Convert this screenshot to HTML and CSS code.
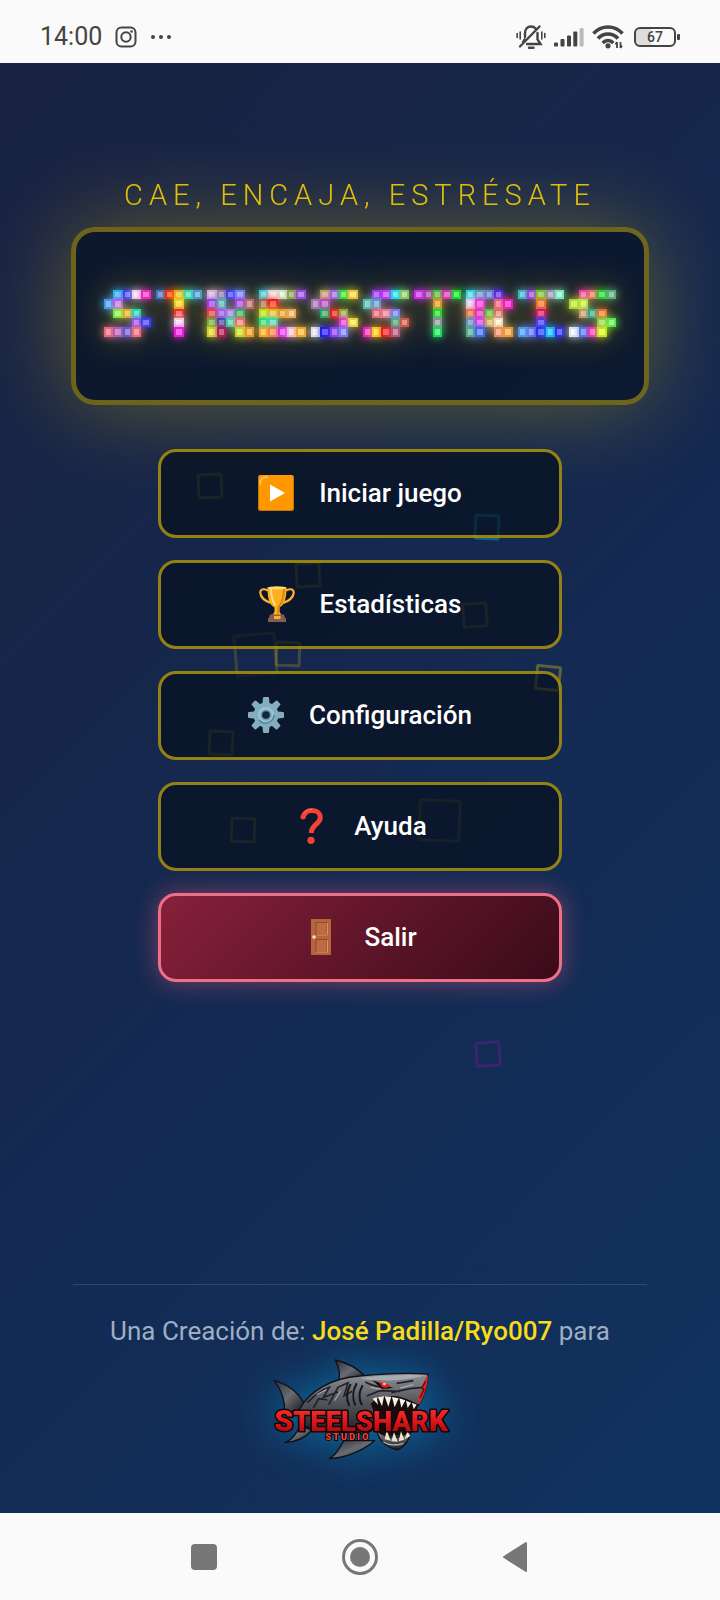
FILE: index.html
```
<!DOCTYPE html>
<html lang="es">
<head>
  <meta charset="UTF-8" />
  <meta name="viewport" content="width=device-width, initial-scale=1.0"/>
  <title>Stresstris</title>
  <link rel="stylesheet" href="styles.css">
</head>
<body>

  <!-- Status bar -->
  <header class="status-bar">
    <div class="status-group">
      <span class="clock">14:00</span>
      <svg class="icon-insta" viewBox="0 0 22 22" fill="none" stroke="#444" stroke-width="2">
        <rect x="1.5" y="1.5" width="19" height="19" rx="5"/>
        <circle cx="11" cy="11" r="4.7"/>
        <circle cx="16.5" cy="5.5" r="1.3" fill="#444" stroke="none"/>
      </svg>
      <svg class="icon-more" viewBox="0 0 22 6" fill="#444">
        <circle cx="3" cy="3" r="2"/><circle cx="11" cy="3" r="2"/><circle cx="19" cy="3" r="2"/>
      </svg>
    </div>
    <div class="status-group status-right">
      <svg class="icon-bell" viewBox="0 0 30 26" fill="none" stroke="#444" stroke-width="2.4" stroke-linecap="round">
        <path d="M9 13V9.500C9 5 11.500 2.500 15 2.500c2 0 3.500.7 4.500 2M21.500 9v6.500l3 4.500H11M8.500 15.500 7 18.500M4 22.500 23.500 2.500M13 23.800h4.500"/>
        <path d="M1.200 9.500v4M4.200 8v7M28.800 9.500v4M25.800 8v7" stroke-width="1.600"/>
      </svg>
      <svg class="icon-signal" viewBox="0 0 30 20" fill="#444">
        <rect x="0" y="15.500" width="4" height="4" rx="1"/>
        <rect x="6.500" y="12" width="4" height="7.500" rx="1"/>
        <rect x="13" y="8.500" width="4" height="11" rx="1"/>
        <rect x="19.300" y="4.500" width="4" height="15" rx="1"/>
        <rect x="25.600" y="1" width="4" height="18.500" rx="1" fill="#bbb"/>
      </svg>
      <svg class="icon-wifi" viewBox="0 0 32 24" fill="none" stroke="#444" stroke-width="3.600">
        <path d="M1.500 8.500C9.500-.2 22.500-.2 30.500 8.500M6 13.500c5.500-6 14.500-6 20 0M10.700 18c3-3.300 7.600-3.300 10.600 0"/>
        <circle cx="16" cy="20.800" r="2.600" fill="#444" stroke="none"/>
        <path d="M25 17v6M23.500 19.500 25 17M28.500 17v6M28.500 23l1.500-2.500" stroke-width="1.800"/>
      </svg>
      <span class="battery">67</span>
    </div>
  </header>

  <!-- Floating squares -->
  <div class="particles" aria-hidden="true">
    <span class="square p1"></span>
    <span class="square cyan p2"></span>
    <span class="square p3"></span>
    <span class="square p4"></span>
    <span class="square big p5"></span>
    <span class="square p6"></span>
    <span class="square bright p7"></span>
    <span class="square p8"></span>
    <span class="square p9"></span>
    <span class="square big p10"></span>
    <span class="square magenta p11"></span>
  </div>

  <main class="menu-screen">
    <p class="tagline">CAE, ENCAJA, ESTRÉSATE</p>
    <div class="logo-box">
      <div class="pixel-title" id="pixelTitle" role="img" aria-label="STRESSTRIS"></div>
    </div>

    <div class="menu">
      <button class="menu-btn" type="button">
        <svg class="menu-icon" viewBox="0 0 36 36">
          <rect width="36" height="36" rx="2" fill="#c77800"/>
          <rect x="1" y="0" width="34" height="35" rx="2" fill="#ff9800"/>
          <path d="M2 9C2 4 4 2 9 2" fill="none" stroke="#ffbd55" stroke-width="2" stroke-linecap="round"/>
          <path d="M12 9.500v17L27 18z" fill="#fff"/>
        </svg>
        <span>Iniciar juego</span>
      </button>
      <button class="menu-btn" type="button">
        <svg class="menu-icon" viewBox="0 0 36 36">
          <path d="M9 4.500C4 2 .8 3.500 1.300 7c.6 5 5 8 10.500 10M27 4.500c5-2.500 8.200-1 7.700 2.500-.6 5-5 8-10.500 10" fill="none" stroke="#ffb02e" stroke-width="2.200"/>
          <path d="M8.500 1.500h19C27.500 11 26 19 20.500 21.500v4l2.500 4.500H13l2.500-4.500v-4C10 19 8.500 11 8.500 1.500z" fill="#ffb020"/>
          <path d="M12 3c.3 8 1.500 13 4.500 16" fill="none" stroke="#ffe08a" stroke-width="2"/>
          <path d="M25 3c-.3 8-2 14-5 17.500l-1 7" fill="none" stroke="#db8312" stroke-width="2"/>
          <ellipse cx="18" cy="1.800" rx="9.500" ry="1.600" fill="#ffd968"/>
          <path d="M11 28.500h14l1 3.500h1v4H9v-4h1z" fill="#855c52"/>
          <rect x="15" y="30" width="6.500" height="3" fill="#ffb020"/>
        </svg>
        <span>Estadísticas</span>
      </button>
      <button class="menu-btn" type="button">
        <svg class="menu-icon" viewBox="0 0 36 36">
          <g fill="#82aec0">
            <circle cx="18" cy="18" r="12.500"/>
            <path id="tooth" d="M15 1q0-1 1-1h4q1 0 1 1l.8 8h-7.600zM15 35q0 1 1 1h4q1 0 1-1l.8-8h-7.600z"/>
            <use href="#tooth" transform="rotate(45 18 18)"/>
            <use href="#tooth" transform="rotate(90 18 18)"/>
            <use href="#tooth" transform="rotate(135 18 18)"/>
          </g>
          <circle cx="18" cy="18" r="8" fill="#9cc3d2"/>
          <path d="M11 23a8.500 8.500 0 0 0 15-5" fill="none" stroke="#5b8799" stroke-width="1.500"/>
          <circle cx="18" cy="18" r="5.500" fill="#6b97a9"/>
          <circle cx="18" cy="18" r="3.800" fill="#12263a"/>
        </svg>
        <span>Configuración</span>
      </button>
      <button class="menu-btn" type="button">
        <svg class="menu-icon" viewBox="0 0 36 36">
          <path d="M9.800 9.500C11.500 4 15 2.600 19 2.600c5.500 0 8.300 3 8.300 6.800 0 6.600-9 7-9 15.600" fill="none" stroke="#f44336" stroke-width="5"/>
          <circle cx="10" cy="8.900" r="2.500" fill="#f44336"/>
          <circle cx="18" cy="32.300" r="3.600" fill="#f44336"/>
          <path d="M11 5.500C13 2.500 16 1.400 19 1.400" fill="none" stroke="#ff7668" stroke-width="1"/>
        </svg>
        <span>Ayuda</span>
      </button>
      <button class="menu-btn exit-btn" type="button">
        <svg class="menu-icon" viewBox="0 0 36 36">
          <rect x="8" y="0" width="20" height="36" fill="#b5643c"/>
          <g stroke-width="1" fill="#bd6c42">
            <rect x="13" y="3.500" width="11" height="12" stroke="#8f4a28"/>
            <rect x="13" y="20.500" width="11" height="12" stroke="#8f4a28"/>
            <path d="M24.500 4v12h-11M24.500 21v12h-11" stroke="#dd9464" fill="none"/>
          </g>
          <circle cx="11" cy="18" r="1.800" fill="#f2e3d8"/>
        </svg>
        <span>Salir</span>
      </button>
    </div>
  </main>

  <footer class="credits">
    <p>Una Creación de: <strong>José Padilla/Ryo007</strong> para</p>
    <svg class="shark" viewBox="60 50 540 315" role="img" aria-label="SteelShark Studio">
      <defs>
        <linearGradient id="steel" x1="0" y1="0" x2="0" y2="1">
          <stop offset="0" stop-color="#8f9196"/>
          <stop offset=".45" stop-color="#55575d"/>
          <stop offset="1" stop-color="#1d1f24"/>
        </linearGradient>
        <linearGradient id="fin" x1="0" y1="0" x2="1" y2="1">
          <stop offset="0" stop-color="#2a2c32"/>
          <stop offset=".5" stop-color="#696c72"/>
          <stop offset="1" stop-color="#16181d"/>
        </linearGradient>
        <linearGradient id="blood" x1="0" y1="0" x2="0" y2="1">
          <stop offset="0" stop-color="#ff3a36"/>
          <stop offset=".55" stop-color="#dd1519"/>
          <stop offset="1" stop-color="#8d070b"/>
        </linearGradient>
      </defs>
      <!-- fins and tail -->
      <g fill="url(#fin)" stroke="#101116" stroke-width="4" stroke-linejoin="round">
        <path d="M256 62c34 8 64 22 88 48l-78 14c6-22 0-42-10-62z"/>
        <path d="M72 123c40 12 70 32 88 66l-12 28-44 2c2-36-12-70-32-96z"/>
        <path d="M104 310c24-8 34-28 46-50l36 12c-20 24-48 36-82 38z"/>
        <path d="M238 358c24-12 28-32 44-54h92c-36 30-86 50-136 54z"/>
      </g>
      <!-- body -->
      <path d="M148 210c30-54 96-94 180-100 60-6 146-10 206-6-2 30-10 66-28 94-14-6-30-14-50-20-30-10-62-8-92 16l30 62-50 30-190-26z" fill="url(#steel)" stroke="#101116" stroke-width="4" stroke-linejoin="round"/>
      <path d="M330 116c60-9 130-11 196-8-40 12-96 18-140 14-20 0-40 0-56-6z" fill="#a9abb0"/>
      <path d="M346 128c20 12 46 16 70 18M172 190c20-18 32-34 66-46l-18 30 44-16M236 196l28-52 30-14-12 40 24-14M190 206l16-28 26 4M440 132l50-8M424 160l56-12 40-4M350 170l40-16 60 2" fill="none" stroke="#202228" stroke-width="5"/>
      <path d="M302 134c-14 24-14 46-4 66M320 132c-14 26-14 44-4 66M338 138c-12 20-12 42-2 60" fill="none" stroke="#15161b" stroke-width="6"/>
      <path d="M200 166l30-16M254 184l18-30M362 144l30 6M450 146l40-10" stroke="#b8babf" stroke-width="3"/>
      <!-- eye -->
      <path d="M366 122l64 24-34 2z" fill="#0d0e12"/>
      <path d="M386 128l36 10q-12 12-26 4z" fill="#f3191b"/>
      <circle cx="403" cy="134" r="4" fill="#ffc2b0"/>
      <!-- bloody snout -->
      <path d="M534 108c-2 32-10 60-26 88-8-20 4-34 8-52 4-14 10-26 18-36z" fill="#df2720"/>
      <path d="M526 126l-10 20 6 4-12 26" fill="none" stroke="#5d0b0a" stroke-width="4"/>
      <!-- mouth -->
      <path d="M366 190c32-28 88-28 138 6-4 28-16 50-32 90l-86 6z" fill="#190b0d"/>
      <path d="M368 178l12-4 4 22zM384 174l18-3-6 30zM404 171l20 1-9 30zM426 173l20 4-12 27zM448 177l18 6-12 22zM468 184l15 6-10 16zM486 190l14 6-9 14z" fill="#f4f0e6"/>
      <!-- lower jaw -->
      <path d="M380 274c30 24 66 28 102 2-4 26-16 44-38 56-32-6-56-26-64-58z" fill="url(#steel)" stroke="#101116" stroke-width="4"/>
      <path d="M404 300l6-28 12 32zM424 306l8-28 11 29zM446 306l7-30 10 25zM464 300l8-24 9 14z" fill="#f0e2c4"/>
      <path d="M400 308c16 10 40 12 60 4" fill="none" stroke="#aeb0b5" stroke-width="4"/>
      <text class="shark-name" x="334" y="274" text-anchor="middle"><tspan class="cap">S</tspan>TEELSHAR<tspan class="cap">K</tspan></text>
      <text class="shark-sub" x="294" y="303" text-anchor="middle">STUDIO</text>
    </svg>
  </footer>

  <!-- Navigation bar -->
  <nav class="nav-bar">
    <button class="nav-btn" type="button" aria-label="Recientes">
      <svg viewBox="0 0 36 36"><rect x="5" y="5" width="26" height="26" rx="4" fill="#777"/></svg>
    </button>
    <button class="nav-btn" type="button" aria-label="Inicio">
      <svg viewBox="0 0 36 36">
        <circle cx="18" cy="18" r="16.500" fill="none" stroke="#777" stroke-width="3"/>
        <circle cx="18" cy="18" r="10" fill="#777"/>
      </svg>
    </button>
    <button class="nav-btn" type="button" aria-label="Atrás">
      <svg viewBox="0 0 36 36"><path d="M6 18 28 4v28z" fill="#777" stroke="#777" stroke-width="2" stroke-linejoin="round"/></svg>
    </button>
  </nav>

  <script src="script.js"></script>
</body>
</html>
```
FILE: styles.css
```
* {
  box-sizing: border-box;
  margin: 0;
  padding: 0;
}
body {
  font-family: Roboto, "Noto Sans", sans-serif;
  background: linear-gradient(135deg, #1a2240 0%, #15284f 45%, #0f3461 100%);
  color: #fff;
  display: flex;
  flex-direction: column;
  min-height: 100vh;
  position: relative;
  overflow-x: hidden;
}

/* Status bar */
.status-bar {
  display: flex;
  justify-content: space-between;
  align-items: center;
  height: 63px;
  padding: 10px 40px 0;
  background: #fafafa;
  color: #444;
}
.status-group {
  display: flex;
  align-items: center;
  gap: 13px;
}
.status-right {
  gap: 8px;
}
.clock {
  font-size: 25px;
  line-height: 28px;
}
.icon-insta {
  width: 22px;
  height: 22px;
}
.icon-more {
  width: 22px;
  height: 6px;
}
.icon-bell {
  width: 30px;
  height: 26px;
}
.icon-signal {
  width: 30px;
  height: 20px;
}
.icon-wifi {
  width: 32px;
  height: 24px;
}
.battery {
  position: relative;
  width: 42px;
  height: 20px;
  margin: 0 4px 0 2px;
  border: 2px solid #444;
  border-radius: 6px;
  background: linear-gradient(90deg, #ddd 0 40%, transparent 40%);
  font-size: 14px;
  font-weight: 500;
  line-height: 16px;
  text-align: center;
}
.battery::after {
  content: "";
  position: absolute;
  right: -6px;
  top: 5px;
  width: 3px;
  height: 6px;
  border-radius: 1px;
  background: #444;
}

/* Floating squares */
.particles {
  position: absolute;
  inset: 0;
  overflow: hidden;
  pointer-events: none;
}
.square {
  position: absolute;
  width: 26px;
  height: 26px;
  border: 3px solid #ffd700;
  border-radius: 2px;
  opacity: 0.2;
}
.square.big {
  width: 43px;
  height: 43px;
  opacity: 0.16;
}
.square.bright { opacity: 0.32; }
.square.cyan { border-color: #00ffff; opacity: 0.28; }
.square.magenta { border-color: #ff00ff; opacity: 0.17; }
.p1 { left: 197px; top: 473px; transform: rotate(-2deg); }
.p2 { left: 474px; top: 514px; transform: rotate(3deg); }
.p3 { left: 295px; top: 562px; transform: rotate(-3deg); }
.p4 { left: 462px; top: 602px; transform: rotate(-4deg); }
.p5 { left: 234px; top: 633px; transform: rotate(-5deg); }
.p6 { left: 275px; top: 641px; transform: rotate(2deg); }
.p7 { left: 535px; top: 665px; transform: rotate(6deg); }
.p8 { left: 208px; top: 730px; transform: rotate(3deg); }
.p9 { left: 230px; top: 817px; transform: rotate(1deg); }
.p10 { left: 418px; top: 799px; transform: rotate(2deg); }
.p11 { left: 475px; top: 1041px; transform: rotate(-4deg); }

/* Menu screen */
.menu-screen {
  position: relative;
  flex: 1;
  display: flex;
  flex-direction: column;
  align-items: center;
  padding: 112px 71px 0;
}
.tagline {
  font-size: 29px;
  font-weight: 300;
  line-height: 40px;
  letter-spacing: 6px;
  color: #ffd700;
  opacity: 0.85;
  margin-bottom: 12px;
}
.logo-box {
  width: 100%;
  padding: 58px 28px 63px;
  border: 5px solid rgba(255, 215, 0, 0.4);
  border-radius: 24px;
  background: rgba(9, 20, 38, 0.75);
  box-shadow: 0 0 90px rgba(255, 215, 0, 0.32);
}
.pixel-title {
  display: flex;
  gap: 5px;
  filter: drop-shadow(0 0 16px rgba(255, 215, 0, 0.3));
}
.letter {
  flex: 1;
  display: grid;
  grid-template-columns: repeat(5, 1fr);
}
.cell {
  aspect-ratio: 1;
}
.cell.on {
  border: 2px solid rgba(0, 0, 0, 0.1);
  box-shadow: 0 0 8px currentColor, inset 0 0 0 9px rgba(255, 255, 255, 0.3);
}
.menu {
  display: flex;
  flex-direction: column;
  gap: 22px;
  width: 70%;
  margin-top: 44px;
}
.menu-btn {
  display: flex;
  align-items: center;
  justify-content: center;
  gap: 25px;
  height: 89px;
  border: 3px solid rgba(255, 215, 0, 0.56);
  border-radius: 18px;
  background: rgba(4, 14, 26, 0.65);
  color: #fff;
  font-family: inherit;
  font-size: 26px;
  font-weight: 500;
  cursor: pointer;
}
.menu-icon {
  width: 36px;
  height: 36px;
}
.exit-btn {
  border-color: #ee7088;
  background: linear-gradient(135deg, #87203a, #3a0b1a);
  box-shadow: 0 0 24px rgba(255, 90, 120, 0.45);
}

/* Credits */
.credits {
  position: relative;
  display: flex;
  flex-direction: column;
  align-items: center;
  margin: 0 73px;
  padding: 30px 0 52px;
  border-top: 1px solid rgba(255, 255, 255, 0.12);
  font-size: 26px;
  line-height: 32px;
  color: #9fadc5;
}
.credits strong {
  font-weight: 500;
  color: #f8dc1a;
}
.shark {
  width: 180px;
  height: 105px;
  margin-top: 9px;
  overflow: visible;
  filter: drop-shadow(0 0 20px rgba(0, 190, 255, 0.4));
}
.shark-name {
  font-family: Roboto, sans-serif;
  font-size: 82px;
  font-weight: 900;
  fill: url(#blood);
  stroke: #150305;
  stroke-width: 9px;
  stroke-linejoin: round;
  paint-order: stroke;
}
.shark-name .cap {
  font-size: 90px;
}
.shark-sub {
  font-family: Roboto, sans-serif;
  font-size: 28px;
  font-weight: 900;
  letter-spacing: 6px;
  fill: #ee4436;
  stroke: #150305;
  stroke-width: 6px;
  paint-order: stroke;
}

/* Navigation bar */
.nav-bar {
  position: relative;
  display: flex;
  justify-content: center;
  align-items: center;
  gap: 120px;
  height: 87px;
  background: #fafafa;
}
.nav-btn {
  width: 36px;
  height: 36px;
  border: none;
  background: none;
  cursor: pointer;
}
.nav-btn svg {
  display: block;
}
```
FILE: script.js
```
const pixelTitle = document.getElementById('pixelTitle');

// One entry per letter: 5 rows of 5 cells, "-" is an empty cell
const letters = [
  '- 3cf 44f fef f3c | 4af c6f - - - | - 8f5 fb3 3eb - | - - - a6f 44f | f78 c6b 66d f78 -',
  '48d f31 fb2 4eb 5ad | - - fe2 - - | - - f33 - - | - - fef - - | - - f2e - -',
  'ece b8a 44f 79f - | a4f 5cb - b4f c77 | f44 b6f c8f 4b6 - | 7b4 54b 4eb f78 - | ee3 b26 - ce3 fa3',
  '4de fee efe 9b5 a5e | a76 f22 - - - | de2 fc3 fa3 fb6 - | 3e8 4ec - - - | fb3 f94 e3f fce fb3',
  '- cb6 b6f 3e4 fd4 | a8b c5c - - - | - 3b7 f22 9b4 - | - - - f3e fe4 | fff 22f 94f 88f -',
  '- a4f d3f 2ef 9d7 | 6cb 6ad - - - | - e78 f89 88f - | - - - 4c9 d65 | f2c fe2 f22 b68 -',
  'd3f b4b 4d4 e3c 2e3 | - - f93 - - | - - 2e3 - - | - - a9a - - | - - 2e6 - -',
  '3ee 6ac 79d 53f - | eef f4e - f78 f2c | f84 f3c 5d4 e77 - | 6ac e4f db5 ffd - | 6b9 47f - f97 fa4',
  '4cc a4f 7d3 a9b 8fc | - - f83 - - | - - e26 - - | - - 54f - - | 5af 78f 33f 2df 33f',
  '- f4b f77 3d3 6b8 | be3 cf4 - - - | - da7 3b9 f73 - | - - - 9d5 6f5 | fff 58f f3c df2 -'
];

letters.forEach(rows => {
  const letter = document.createElement('div');
  letter.classList.add('letter');
  rows.replace(/\| /g, '').split(' ').forEach(color => {
    const cell = document.createElement('span');
    cell.classList.add('cell');
    if (color !== '-') {
      cell.classList.add('on');
      cell.style.color = `#${color}`;
      cell.style.backgroundColor = `#${color}`;
    }
    letter.appendChild(cell);
  });
  pixelTitle.appendChild(letter);
});
```
